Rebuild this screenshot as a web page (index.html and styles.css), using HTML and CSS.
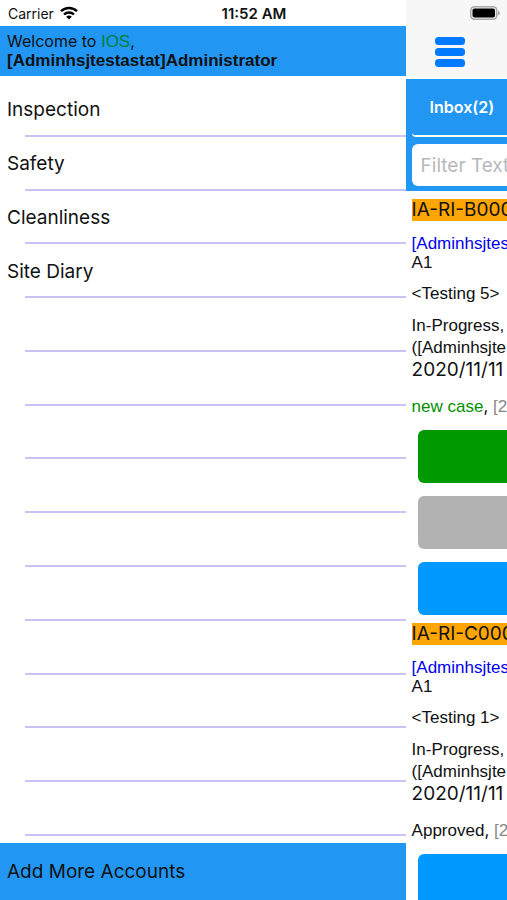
FILE: index.html
```html
<!DOCTYPE html>
<html lang="en">
<head>
<meta charset="utf-8">
<meta name="viewport" content="width=device-width, initial-scale=1">
<title>Inbox</title>
<link rel="stylesheet" href="styles.css">
</head>
<body>
<div class="app">
  <div class="status">
    <span class="carrier">Carrier
      <svg class="wifi" viewBox="0 0 18 14" aria-hidden="true"><g fill="none" stroke="#000" stroke-width="2.4"><path d="M1 5.2a11.5 11.5 0 0 1 16 0"/><path d="M4 8.500a7.200 7.200 0 0 1 10 0"/></g><path d="M9 13.500 6.200 10.800a4 4 0 0 1 5.600 0z"/></svg>
    </span>
    <span class="time">11:52 AM</span>
    <svg class="battery" viewBox="0 0 30 14" aria-hidden="true"><rect x=".75" y=".75" width="26" height="12.500" rx="3.500" fill="#eee" stroke="#aaa" stroke-width="1.500"/><rect x="2.500" y="2.500" width="22.500" height="9" rx="2"/><path d="M28 4.500q2 1 2 2.500t-2 2.500z" fill="#aaa"/></svg>
  </div>
  <aside class="drawer">
    <header class="welcome">
      <p class="greeting">Welcome to <span class="platform">IOS</span>,</p>
      <p class="user">[Adminhsjtestastat]Administrator</p>
    </header>
    <ul class="menu">
      <li><a href="#inspection">Inspection</a></li>
      <li><a href="#safety">Safety</a></li>
      <li><a href="#cleanliness">Cleanliness</a></li>
      <li><a href="#diary">Site Diary</a></li>
      <li></li><li></li><li></li><li></li><li></li>
      <li></li><li></li><li></li><li></li><li></li>
    </ul>
    <button class="add" type="button">Add More Accounts</button>
  </aside>
  <main class="page">
    <div class="nav">
      <button class="burger" type="button" aria-label="Menu">
        <svg viewBox="0 0 30 30" fill="#007aff" aria-hidden="true"><rect width="30" height="8" rx="3.500"/><rect y="11" width="30" height="8" rx="3.500"/><rect y="22" width="30" height="8" rx="3.500"/></svg>
      </button>
    </div>
    <div class="tools">
      <button class="tab" type="button">Inbox(2)</button>
      <input class="filter" type="text" placeholder="Filter Text" aria-label="Filter Text">
    </div>
    <article class="case">
      <h2>IA-RI-B000</h2>
      <p class="owner"><span>[Adminhsjtes</span><br>A1</p>
      <p class="subject">&lt;Testing 5&gt;</p>
      <p class="state">In-Progress,<br>([Adminhsjte<br><time>2020/11/11</time></p>
      <p class="note"><span class="new">new case</span><span class="comma">,</span> <span class="ref">[2</span></p>
      <div class="actions">
        <button class="green" type="button" aria-label="Accept"></button>
        <button class="grey" type="button" aria-label="Close"></button>
        <button class="blue" type="button" aria-label="Open"></button>
      </div>
    </article>
    <article class="case">
      <h2>IA-RI-C000</h2>
      <p class="owner"><span>[Adminhsjtes</span><br>A1</p>
      <p class="subject">&lt;Testing 1&gt;</p>
      <p class="state">In-Progress,<br>([Adminhsjte<br><time>2020/11/11</time></p>
      <p class="note">Approved<span class="comma">,</span> <span class="ref">[2</span></p>
      <div class="actions">
        <button class="blue" type="button" aria-label="Open"></button>
      </div>
    </article>
  </main>
</div>
</body>
</html>
```
FILE: styles.css
```css
* { box-sizing: border-box; }
body, p, h2, ul { margin: 0; padding: 0; }
body { background: #fff; color: #111; font-family: Inter, "Liberation Sans", sans-serif; }
button { border: 0; padding: 0; font: inherit; color: inherit; }
.app {
  position: relative;
  display: grid;
  grid-template-columns: 4fr 1fr;
  height: 100vh;
  overflow: hidden;
}
.status {
  position: absolute;
  top: 0;
  left: 0;
  right: 0;
  display: grid;
  grid-template-columns: 1fr auto 1fr;
  align-items: center;
  height: 26px;
  padding: 0 7px 0 8px;
  font-size: 14px;
}
.carrier { display: flex; align-items: center; gap: 6px; }
.wifi { width: 18px; height: 14px; }
.time { font-size: 15px; font-weight: 600; }
.battery { width: 30px; height: 14px; justify-self: end; }

.drawer { display: flex; flex-direction: column; min-width: 0; min-height: 0; padding-top: 26px; }
.welcome { padding: 6px 7px; background: #2196f3; font-size: 16px; line-height: 19px; }
.user, .platform { font-family: "Liberation Sans", sans-serif; font-size: 17px; }
.user { font-weight: 700; }
.platform { color: #00803a; }
.menu {
  flex: 1;
  display: grid;
  grid-auto-rows: 1fr;
  padding: 7px 0;
  list-style: none;
}
.menu li {
  display: flex;
  align-items: center;
  padding-left: 7px;
  background: linear-gradient(#c8c3f3, #c8c3f3) 25px 100% / 100% 2px no-repeat;
}
.menu a { color: inherit; text-decoration: none; font-size: 19px; }
.add {
  height: 57px;
  padding-left: 7px;
  background: #2196f3;
  font-size: 19px;
  text-align: left;
}

.page { min-width: 0; overflow: hidden; }
.nav { height: 79px; padding: 37px 0 0 29px; background: #f7f7f7; border-bottom: 2px solid #fff; }
.burger { display: block; width: 30px; height: 30px; background: none; }
.burger svg { display: block; }
.tools { width: 100vw; height: 112px; padding-left: 6px; background: #2196f3; }
.tab {
  display: block;
  width: 100%;
  height: 58px;
  padding-left: 18px;
  background: none;
  border-bottom: 2px solid #fff;
  border-radius: 4px;
  color: #fff;
  font-size: 16px;
  font-weight: 600;
  text-align: left;
}
.filter {
  display: block;
  width: 100%;
  height: 42px;
  margin-top: 7px;
  padding: 0 9px;
  border: 0;
  border-radius: 6px;
  background: #fff;
  font: 19px Inter, sans-serif;
}
.filter::placeholder { color: #b8b8bc; }

.case {
  width: 100vw;
  padding: 8px 0 0 6px;
  font: 17px/22px "Liberation Sans", sans-serif;
}
.case h2 {
  background: #ffa500;
  font: 400 19px/22px Inter, sans-serif;
}
.owner { margin-top: 13px; line-height: 19px; }
.owner span { color: #0000f0; }
.subject { margin-top: 11px; }
.state { margin-top: 10px; }
.state time { display: block; font: 19px/22px Inter, sans-serif; }
.note { margin-top: 14px; }
.comma { font-family: Inter, sans-serif; }
.new { color: #009000; }
.ref { color: #888; }
.actions { display: grid; gap: 13px; margin-top: 12px; padding-left: 6px; }
.actions button { height: 53px; border-radius: 6px; }
.green { background: #090; }
.grey { background: #b2b2b2; }
.blue { background: #09f; }
```
